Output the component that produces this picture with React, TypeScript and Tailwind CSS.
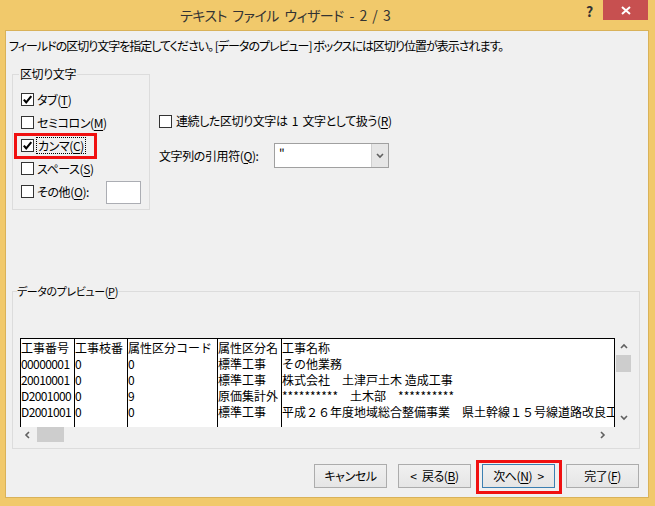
import React from 'react';

const ui = "font-['Noto_Sans_CJK_JP',sans-serif] [font-feature-settings:'palt']";

function CheckBox({ checked = false }: { checked?: boolean }) {
  return (
    <span className="flex h-[13px] w-[13px] shrink-0 items-center justify-center border border-[#333333] bg-white">
      {checked && (
        <svg width="11" height="11" viewBox="0 0 11 11">
          <path d="M1.8 5.6 L4.2 8.3 L9.3 2.2" fill="none" stroke="#000" strokeWidth="2.1" />
        </svg>
      )}
    </span>
  );
}

const Key = ({ k }: { k: string }) => (
  <>
    (<span className="underline underline-offset-[2px]">{k}</span>)
  </>
);

function Chevron({ dir }: { dir: 'up' | 'down' | 'left' | 'right' }) {
  const d = {
    up: 'M1 5 L4 2 L7 5',
    down: 'M1 2 L4 5 L7 2',
    left: 'M5 1 L2 4 L5 7',
    right: 'M2 1 L5 4 L2 7',
  }[dir];
  return (
    <svg width="8" height="8" viewBox="0 0 8 8">
      <path d={d} fill="none" stroke="#606060" strokeWidth="1.6" />
    </svg>
  );
}

function Button({ label, primary }: { label: React.ReactNode; primary?: boolean }) {
  return (
    <div
      className={`flex h-[24px] w-[73px] items-center justify-center border bg-gradient-to-b from-[#f0f0f0] to-[#e5e5e5] text-[12px] text-black [word-spacing:3px] ${
        primary ? 'border-[#3c7fb1]' : 'border-[#acacac]'
      }`}
    >
      {label}
    </div>
  );
}

const cols = [
  { w: 'w-[54px]', head: '工事番号', rows: ['00000001', '20010001', 'D2001000', 'D2001001'], mono: true },
  { w: 'w-[53px]', head: '工事枝番', rows: ['0', '0', '0', '0'], mono: true },
  { w: 'w-[90px]', head: '属性区分コード', rows: ['0', '0', '9', '0'], mono: true },
  { w: 'w-[64px]', head: '属性区分名', rows: ['標準工事', '標準工事', '原価集計外', '標準工事'] },
  {
    w: 'flex-1',
    head: '工事名称',
    rows: [
      'その他業務',
      '株式会社　土津戸土木 造成工事',
      '**********　土木部　**********',
      '平成２６年度地域総合整備事業　県土幹線１５号線道路改良工',
    ],
    last: true,
  },
];

export default function App() {
  return (
    <div className={`flex h-[506px] w-[655px] flex-col bg-[#f1c96b] text-black ${ui}`}>
      {/* タイトルバー */}
      <div className="flex h-[30px] shrink-0">
        <div className="flex-1 pl-[180px] pt-[4px] text-[14px] tracking-[-0.5px] leading-[22px] text-[#333333] [word-spacing:3px]">
          テキスト ファイル ウィザード - 2 / 3
        </div>
        <div className="w-[27px] pt-[2px] text-center text-[14px] font-bold leading-[18px] text-[#333333]">?</div>
        <div className="mr-[7px] flex h-[20px] w-[45px] items-center justify-center bg-[#c75050]">
          <svg width="10" height="9" viewBox="0 0 10 9">
            <path d="M1 1 L9 8 M9 1 L1 8" stroke="#fff" strokeWidth="2" />
          </svg>
        </div>
      </div>

      {/* クライアント領域 */}
      <div className="mb-[8px] ml-[5px] mr-[6px] flex flex-1 flex-col border border-[#d9b259] bg-[#f0f0f0] text-[12px] tracking-[-0.4px]">
        <p className="ml-[3px] mt-[7px] leading-[16px] tracking-[-1px]">
          フィールドの区切り文字を指定してください。 [データのプレビュー] ボックスには区切り位置が表示されます。
        </p>

        <div className="mt-[12px] flex">
          <fieldset className="ml-[6px] h-[144px] w-[138px] border border-[#dcdcdc]">
            <legend className="ml-[6px] px-[1px] leading-[16px]">区切り文字</legend>
            <div className="mt-[6px] flex flex-col pl-[8px]">
              <div className="flex h-[23px] items-center gap-[3px]">
                <CheckBox checked />
                <span>
                  タブ<Key k="T" />
                </span>
              </div>
              <div className="flex h-[23px] items-center gap-[3px]">
                <CheckBox />
                <span>
                  セミコロン<Key k="M" />
                </span>
              </div>
              <div className="relative flex h-[23px] items-center gap-[2px]">
                <span className="absolute left-[-7px] top-[-1px] h-[26px] w-[83px] border-[3px] border-[#f01010]" />
                <CheckBox checked />
                <span className="border border-dotted border-black px-[1px] leading-[15px]">
                  カンマ<Key k="C" />
                </span>
              </div>
              <div className="flex h-[23px] items-center gap-[3px]">
                <CheckBox />
                <span>
                  スペース<Key k="S" />
                </span>
              </div>
              <div className="flex h-[23px] items-center gap-[3px]">
                <CheckBox />
                <span className="w-[66px]">
                  その他<Key k="O" />:
                </span>
                <span className="mt-[2px] h-[23px] w-[35px] border border-[#abadb3] bg-white" />
              </div>
            </div>
          </fieldset>

          <div className="ml-[9px] flex flex-col">
            <div className="mt-[47px] flex h-[16px] items-center gap-[4px]">
              <CheckBox />
              <span className="[word-spacing:2px]">
                連続した区切り文字は 1 文字として扱う<Key k="R" />
              </span>
            </div>
            <div className="mt-[14px] flex h-[25px] items-center">
              <span className="w-[115px]">
                文字列の引用符<Key k="Q" />:
              </span>
              <div className="flex h-[25px] w-[115px] border border-[#a0a0a0] bg-white">
                <span className="flex-1 pl-[4px] leading-[18px]">"</span>
                <span className="flex w-[17px] items-center justify-center border-l border-[#d0d0d0] bg-[#e6e6e6]">
                  <Chevron dir="down" />
                </span>
              </div>
            </div>
          </div>
        </div>

        <fieldset className="ml-[6px] mt-[73px] h-[166px] w-[628px] border border-[#dcdcdc]">
          <legend className="ml-[4px] leading-[16px] text-[11px]">
            データのプレビュー<Key k="P" />
          </legend>
          <div className="ml-[7px] mt-[39px] flex w-[612px] flex-col">
            <div className="flex h-[89px]">
              <div className="flex w-[595px] overflow-hidden border-l border-r border-t border-black bg-white text-[12px] leading-[16px] tracking-normal [font-feature-settings:normal]">
                {cols.map((c) => (
                  <div
                    key={c.head}
                    className={`${c.w} shrink-0 overflow-hidden whitespace-nowrap pt-[1px] ${c.last ? 'min-w-0' : 'border-r border-black'}`}
                  >
                    <div>{c.head}</div>
                    {c.rows.map((r, i) => (
                      <div key={i} className={c.mono ? 'tracking-[-0.6px]' : ''}>
                        {r}
                      </div>
                    ))}
                  </div>
                ))}
              </div>
              <div className="flex w-[17px] flex-col items-center">
                <div className="mt-[5px]">
                  <Chevron dir="up" />
                </div>
                <div className="mt-[4px] h-[17px] w-[15px] bg-[#cdcdcd]" />
                <div className="mt-auto mb-[5px]">
                  <Chevron dir="down" />
                </div>
              </div>
            </div>
            <div className="flex h-[15px] w-[595px] items-center">
              <div className="ml-[4px]">
                <Chevron dir="left" />
              </div>
              <div className="ml-[5px] h-[15px] w-[27px] bg-[#cdcdcd]" />
              <div className="ml-auto mr-[8px]">
                <Chevron dir="right" />
              </div>
            </div>
          </div>
        </fieldset>

        <div className="mt-[15px] flex justify-end gap-[11px] pr-[9px]">
          <Button label="キャンセル" />
          <Button
            label={
              <>
                &lt; 戻る<Key k="B" />
              </>
            }
          />
          <div className="relative">
            <span className="absolute -bottom-[6px] -left-[6px] -right-[7px] -top-[4px] border-[3px] border-[#f01010]" />
            <Button
              primary
              label={
                <>
                  次へ<Key k="N" /> &gt;
                </>
              }
            />
          </div>
          <Button
            label={
              <>
                完了<Key k="F" />
              </>
            }
          />
        </div>
      </div>
    </div>
  );
}
